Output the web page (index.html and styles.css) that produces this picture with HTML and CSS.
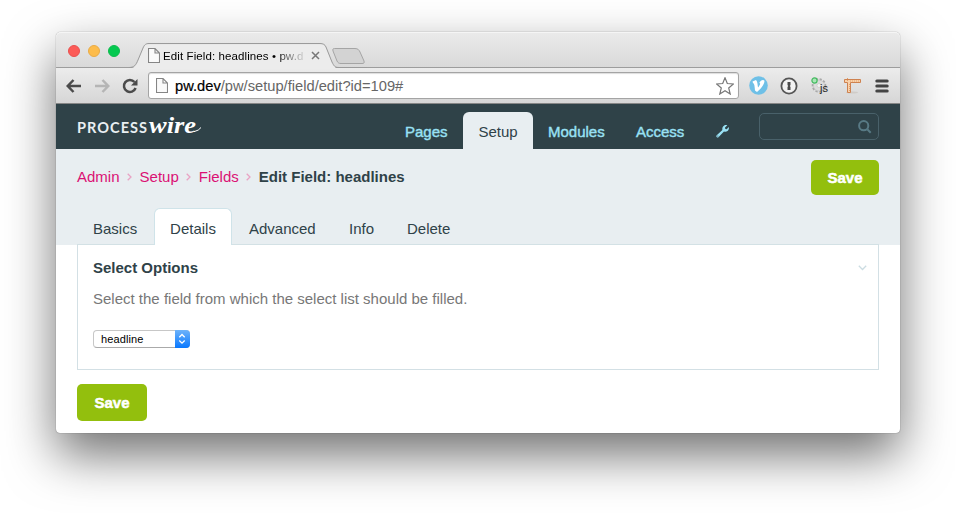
FILE: index.html
```html
<!DOCTYPE html>
<html lang="en">
<head>
<meta charset="utf-8">
<title>Edit Field: headlines • pw.dev</title>
<link rel="stylesheet" href="styles.css">
</head>
<body>
<div class="window">
  <div class="tabstrip">
    <div class="lights"><i class="red"></i><i class="amber"></i><i class="green"></i></div>
    <div class="browser-tab">
      <svg class="tab-shape" width="238" height="26" viewBox="0 0 238 26"><path class="tab-fill" d="M0 25.500C6 25 7 23 9 18L14 6C15.500 2 17 1.500 20 1.500H191C194 1.500 196 2.500 197 5L203 20C205 24 206 25 210 25.500V26H0Z"/><path class="tab-line" d="M0 24.500C5 24.500 7 22 9 17L14 5C15.500 1.500 17 .5 20 .5H191C194 .5 196 1.500 197 4L203 19C205 23 206 24.500 210 24.500H238"/><path class="new-tab" d="M205.500 5.500H226C229 5.500 230 7 231 9L235 18C235.500 20 235 20.500 233 20.500H212C210 20.500 209 20 208 18L204 8C203.500 6 204 5.500 205.500 5.500Z"/></svg>
      <div class="tab-content">
        <svg class="page-icon" width="12" height="15" viewBox="0 0 12 15"><path d="M.5 .5H7L11.500 5V14.500H.5ZM7 .5V5H11.500"/></svg>
        <span class="tab-title">Edit Field: headlines • pw.d</span>
        <svg class="close" width="9" height="9" viewBox="0 0 9 9"><path d="M1 1L8 8M8 1L1 8"/></svg>
      </div>
    </div>
  </div>
  <div class="toolbar">
    <svg class="back" width="16" height="14" viewBox="0 0 16 14"><path d="M7.500 1L1.700 7L7.500 13M2 7H15"/></svg>
    <svg class="forward" width="16" height="14" viewBox="0 0 16 14"><path d="M8.500 1L14.300 7L8.500 13M14 7H1"/></svg>
    <svg class="reload" width="16" height="16" viewBox="0 0 16 16"><path class="arc" d="M12.500 4A6 6 0 1 0 13.600 10"/><path class="tip" d="M15.500 1V7.500H9Z"/></svg>
    <div class="address">
      <svg class="page-icon" width="12" height="15" viewBox="0 0 12 15"><path d="M.5 .5H7L11.500 5V14.500H.5ZM7 .5V5H11.500"/></svg>
      <span class="url"><b>pw.dev</b>/pw/setup/field/edit?id=109#</span>
      <svg class="star" width="18" height="18" viewBox="0 0 18 18"><path d="M9 .8L11.300 6.500L17.400 7L12.700 11L14.200 17L9 13.700L3.800 17L5.300 11L.6 7L6.700 6.500Z"/></svg>
    </div>
    <div class="extensions">
      <svg width="19" height="19" viewBox="0 0 19 19"><circle cx="9.500" cy="9.500" r="9.300" fill="#6fc0e7"/><path d="M3.500 5.500L7 4C8.700 5.500 8.500 9 9 11.500C11 9 12 7 10.300 7C11.500 4 14.500 3 15.500 4.800C15.500 8.500 11 13.500 8 16L6 14.500C5.500 10 5.500 7.500 4 7Z" fill="#fff"/></svg>
      <svg class="onepass" width="18" height="18" viewBox="0 0 18 18"><circle cx="9" cy="9" r="7.600" fill="#f2f2f2" stroke="#555" stroke-width="1.800"/><path d="M7.500 5H10.500V8L9.800 9L10.500 10V13H7.500V10L8.200 9L7.500 8Z" fill="#4b4b4b"/></svg>
      <svg class="script" width="18" height="18" viewBox="0 0 18 18"><circle cx="8" cy="8.500" r="5.800" fill="none" stroke="#a8a8a8" stroke-width="3" stroke-dasharray="2 1.400"/><circle cx="8" cy="8.500" r="5.500" fill="#dcdcdc" stroke="#c0c0c0" stroke-width=".6"/><circle cx="8" cy="8.500" r="2" fill="#f2f2f2" stroke="#bbb" stroke-width=".5"/><circle cx="3.500" cy="3.500" r="2.600" fill="#a9e6b6" stroke="#45bb61" stroke-width="1.200"/><text x="9" y="15" class="js">js</text></svg>
      <svg width="17" height="17" viewBox="0 0 17 17"><ellipse cx="8" cy="15.500" rx="6" ry="1" fill="#cfcbc7"/><path d="M.5 2.500H16.500V5.500H6.500V15.500H3.500V5.500H.5Z" fill="#f9d2ab" stroke="#ce8250"/><path d="M3.500 1V5M6 4H15M5.500 7V14" stroke="#e6a069" stroke-dasharray="1 1"/></svg>
      <svg width="14" height="14" viewBox="0 0 14 14"><path d="M1.800 2H12.200M1.800 7H12.200M1.800 12H12.200" stroke="#444" stroke-width="3" stroke-linecap="round"/></svg>
    </div>
  </div>
  <header class="masthead">
    <svg class="logo" width="128" height="28" viewBox="0 0 128 28"><text class="process" x="1" y="18.500" textLength="71" lengthAdjust="spacingAndGlyphs">PROCESS</text><text class="wire" x="73" y="18.500" textLength="47" lengthAdjust="spacingAndGlyphs">wire</text><path d="M118 17.700Q123 16.500 125 13.500" fill="none" stroke="#fff"/></svg>
    <nav class="main-nav">
      <a class="pages">Pages</a><a class="active">Setup</a><a class="modules">Modules</a><a class="access">Access</a>
      <svg class="wrench" width="13" height="13" viewBox="0 0 13 13"><path d="M8.200 .5C9.200 0 10.500 0 11.300 .3L9 2.500L9.300 4L10.700 4.200L12.800 2C13.200 4 12.500 5.300 11.500 6.100C10.500 6.900 9 7 8 6.500L2.700 12C1.300 13.400-.5 11.800 .7 10.300L6.400 5C6 3.300 6.600 1.500 8.200 .5Z"/><circle cx="1.900" cy="11.100" r=".5" fill="#2f4248"/></svg>
    </nav>
    <div class="search"><svg width="14" height="14" viewBox="0 0 14 14"><circle cx="5.700" cy="5.700" r="4.600"/><path d="M9.300 9.300L12.700 12.700"/></svg></div>
  </header>
  <section class="page-head">
    <div class="crumb-row">
      <div class="crumbs">
        <a>Admin</a><svg width="5" height="8" viewBox="0 0 5 8"><path d="M.7 .7L4 4L.7 7.300"/></svg><a>Setup</a><svg width="5" height="8" viewBox="0 0 5 8"><path d="M.7 .7L4 4L.7 7.300"/></svg><a>Fields</a><svg width="5" height="8" viewBox="0 0 5 8"><path d="M.7 .7L4 4L.7 7.300"/></svg><strong>Edit Field: headlines</strong>
      </div>
      <button class="save top">Save</button>
    </div>
    <div class="tabs"><a class="basics">Basics</a><a class="current">Details</a><a class="advanced">Advanced</a><a class="info">Info</a><a>Delete</a></div>
  </section>
  <main>
    <section class="panel">
      <div class="panel-title"><h2>Select Options</h2><svg width="9" height="6" viewBox="0 0 9 6"><path d="M.8 .8L4.500 4.500L8.200 .8"/></svg></div>
      <p>Select the field from which the select list should be filled.</p>
      <div class="select"><span>headline</span><div class="stepper"><svg width="8" height="12" viewBox="0 0 8 12"><path d="M1.300 4.200L4 1.500L6.700 4.200M1.300 7.500L4 10.200L6.700 7.500"/></svg></div></div>
    </section>
    <button class="save bottom">Save</button>
  </main>
</div>
</body>
</html>
```
FILE: styles.css
```css
* { box-sizing: border-box; }
body { margin: 0; height: 513px; overflow: hidden; background: #fff; padding: 32px 56px 0; font: 15px "Liberation Sans", Arial, sans-serif; color: #2f4248; }
svg { display: block; flex: none; }
.window { width: 844px; height: 401px; border-radius: 5px 5px 4px 4px; background: #fff; box-shadow: 0 0 1px rgba(0,0,0,.65), 0 22px 50px rgba(0,0,0,.56); }

.tabstrip { height: 36px; display: flex; border-radius: 5px 5px 0 0; background: linear-gradient(#ebebeb, #d9d9d9); box-shadow: inset 0 1px #f5f5f5, inset 0 -1px #9d9d9d; }
.lights { display: flex; gap: 8px; padding: 13px 0 0 12px; width: 76px; }
.lights i { width: 12px; height: 12px; border-radius: 50%; border: 1px solid #e9504e; background: #fc5b57; }
.lights .amber { border-color: #e9ab46; background: #fdbc4b; }
.lights .green { border-color: #0ebb4e; background: #05c950; }
.browser-tab { display: grid; width: 238px; padding-top: 11px; }
.tab-shape, .tab-content { grid-area: 1 / 1; }
.tab-shape { margin-left: -3px; }
.tab-fill { fill: #ececec; }
.tab-line { fill: none; stroke: #9b9b9b; }
.new-tab { fill: #d3d3d3; stroke: #a5a5a5; }
.tab-content { display: flex; align-items: flex-start; padding: 5px 0 0 16px; height: 24px; }
.page-icon { fill: #fafafa; stroke: #858585; stroke-width: 1.1; }
.tab-title { width: 144px; margin: 1px 4px 0 3px; white-space: nowrap; font-size: 11.5px; line-height: 15px; letter-spacing: .1px; background: linear-gradient(90deg, #000 0 116px, #555 122px, transparent 145px); background-clip: text; -webkit-background-clip: text; color: transparent; }
.close { margin-top: 3px; fill: none; stroke: #777; stroke-width: 1.5; }

.toolbar { height: 36px; display: flex; align-items: center; padding: 0 11px 0 10px; background: linear-gradient(#ececec, #d6d6d6); border-bottom: 1px solid #868686; }
.back, .forward { fill: none; stroke: #4b4b4b; stroke-width: 2.5; }
.forward { margin-left: 12px; stroke: #b5b5b5; }
.reload { margin: 0 10px 0 12px; }
.arc { fill: none; stroke: #4b4b4b; stroke-width: 2.5; }
.tip { fill: #4b4b4b; }
.address { display: flex; align-items: center; width: 591px; height: 27px; background: #fff; border: 1px solid #a4a4a4; border-radius: 3px; box-shadow: inset 0 1px 1px #ddd; padding: 0 4px 0 7px; }
.url { margin-left: 7px; flex: 1; font-size: 14.7px; color: #666; }
.url b { font-weight: 400; color: #000; -webkit-text-stroke: .2px #000; }
.star { fill: #fff; stroke: #777; stroke-width: 1.2; }
.extensions { flex: 1; display: flex; align-items: center; justify-content: space-between; margin-left: 10px; }
.onepass { margin-left: -3px; }
.script { margin-left: -1px; overflow: visible; }
.js { font: 11px "Liberation Sans"; fill: #222; }

.masthead { height: 45px; display: flex; padding: 0 21px 0 20px; background: #2f4248; }
.logo { margin-top: 10px; overflow: visible; }
.process { font: 700 14.5px Lato, sans-serif; letter-spacing: 1px; fill: #e9eff2; }
.wire { font: italic 700 23px "Liberation Serif", serif; fill: #fff; }
.main-nav { display: flex; flex: 1; margin-left: 201px; padding-top: 8px; }
.main-nav a { height: 37px; line-height: 40px; color: #99e1f4; -webkit-text-stroke: .4px #99e1f4; }
.pages { width: 58px; }
.main-nav .active { width: 70px; margin-right: 15px; text-align: center; border-radius: 6px 6px 0 0; background: #e8eef1; color: #2f4248; -webkit-text-stroke: 0; }
.modules { width: 88px; }
.access { width: 80px; }
.wrench { margin-top: 13px; fill: #99e1f4; }
.search { width: 120px; height: 27px; margin-top: 9px; border: 1px solid #49616a; border-radius: 5px; padding: 6px; display: flex; justify-content: flex-end; }
.search svg { fill: none; stroke: #587a85; stroke-width: 2; }

.page-head { height: 96px; padding: 11px 21px 0; background: #e8eef1; }
.crumb-row { height: 48px; display: flex; justify-content: space-between; }
.crumbs { display: flex; height: 33px; align-items: center; }
.crumbs a { color: #db1174; }
.crumbs svg { margin: 1px 8px 0 7px; fill: none; stroke: #e9a3c4; stroke-width: 1.3; }
.save { border: 0; padding: 0; background: #93bf0d; border-radius: 5px; color: #fff; font: 700 15px "Liberation Sans", sans-serif; -webkit-text-stroke: .5px #fff; }
.save.top { width: 68px; height: 35px; }
.save.bottom { width: 70px; height: 37px; margin-top: 14px; }
.tabs { display: flex; height: 37px; padding-left: 16px; box-shadow: inset 0 -1px #d3e1e5; }
.tabs a { height: 37px; line-height: 41px; }
.basics { width: 61px; }
.tabs .current { width: 78px; margin-right: 17px; line-height: 39px; text-align: center; border: 1px solid #cfe3e9; border-bottom: 0; border-radius: 6px 6px 0 0; background: #fff; }
.advanced { width: 100px; }
.info { width: 58px; }

main { padding: 0 21px; }
.panel { height: 125px; border: 1px solid #d3e0e5; border-top: 0; padding: 14px 11px 0 15px; }
.panel-title { display: flex; justify-content: space-between; height: 17px; }
.panel-title h2 { margin: 0; font-size: 15px; line-height: 18px; }
.panel-title svg { margin-top: 6px; fill: none; stroke: #cbdce2; stroke-width: 1.3; }
.panel p { margin: 14px 0 0; line-height: 18px; color: #777; }
.select { display: flex; width: 97px; height: 18px; margin-top: 22px; border: 1px solid #c7c7c7; border-bottom-color: #aaa; border-radius: 4px; font-size: 11px; line-height: 17px; color: #000; }
.select span { flex: 1; padding-left: 7px; letter-spacing: .12px; }
.stepper { width: 15px; height: 18px; margin: -1px -1px 0 0; padding: 3px 0 0 3px; border-radius: 0 4px 4px 0; background: linear-gradient(#6eb3fa, #0878ff); }
.stepper svg { fill: none; stroke: #fff; stroke-width: 1.3; }
```
